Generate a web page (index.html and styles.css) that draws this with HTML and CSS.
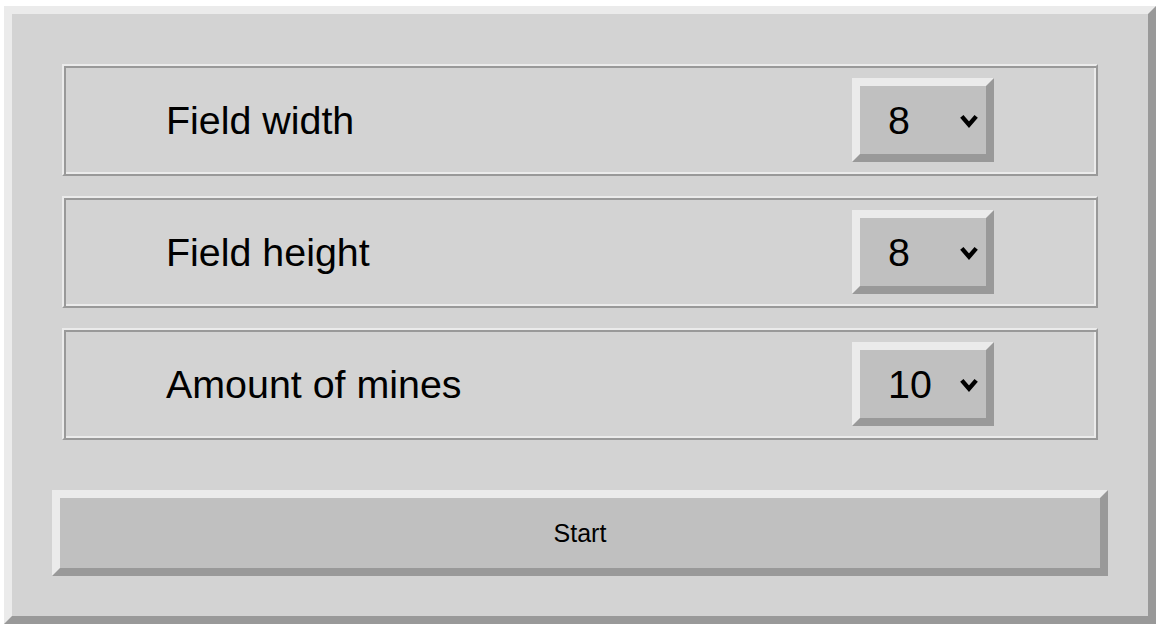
FILE: index.html
```html
<!DOCTYPE html>
<html lang="en">
<head>
<meta charset="utf-8">
<title>Minesweeper settings</title>
<link rel="stylesheet" href="styles.css">
</head>
<body>
<form class="panel">
  <div class="rows">
    <label class="row">
      <span class="label">Field width</span>
      <span class="select-wrap">
        <select class="select">
          <option selected>8</option>
          <option>10</option>
          <option>16</option>
        </select>
        <svg class="chevron" width="19" height="16" viewBox="0 0 19 16" aria-hidden="true"><polyline points="1.8,3.4 9,11.6 16.2,3.4" fill="none" stroke="#000" stroke-width="4.4"/></svg>
      </span>
    </label>
    <label class="row">
      <span class="label">Field height</span>
      <span class="select-wrap">
        <select class="select">
          <option selected>8</option>
          <option>10</option>
          <option>16</option>
        </select>
        <svg class="chevron" width="19" height="16" viewBox="0 0 19 16" aria-hidden="true"><polyline points="1.8,3.4 9,11.6 16.2,3.4" fill="none" stroke="#000" stroke-width="4.4"/></svg>
      </span>
    </label>
    <label class="row">
      <span class="label">Amount of mines</span>
      <span class="select-wrap">
        <select class="select">
          <option selected>10</option>
          <option>20</option>
          <option>40</option>
        </select>
        <svg class="chevron" width="19" height="16" viewBox="0 0 19 16" aria-hidden="true"><polyline points="1.8,3.4 9,11.6 16.2,3.4" fill="none" stroke="#000" stroke-width="4.4"/></svg>
      </span>
    </label>
  </div>
  <button type="button" class="start">Start</button>
</form>
</body>
</html>
```

FILE: styles.css
```css
html, body {
  margin: 0;
  padding: 0;
  background: #ffffff;
}

body {
  font-family: "Liberation Sans", Arial, sans-serif;
  color: #000;
}

.panel {
  box-sizing: border-box;
  width: 1152px;
  height: 618px;
  margin: 6px 4px 4px;
  padding: 50px 50px 40px;
  background: #d3d3d3;
  border: 8px solid;
  border-color: #ebebeb #999999 #999999 #ebebeb;
  display: flex;
  flex-direction: column;
}

.rows {
  display: flex;
  flex-direction: column;
  gap: 20px;
}

.row {
  box-sizing: border-box;
  height: 112px;
  padding: 0 102px;
  display: flex;
  align-items: center;
  justify-content: space-between;
  border: 2px solid;
  border-color: #ebebeb #999999 #999999 #ebebeb;
  box-shadow: inset 2px 2px 0 #999999, inset -2px -2px 0 #ebebeb;
}

.label {
  font-size: 39.4px;
  line-height: 1;
  padding-top: 2px;
}

.select-wrap {
  position: relative;
  display: block;
  width: 142px;
  height: 84px;
}

.select {
  -webkit-appearance: none;
  appearance: none;
  box-sizing: border-box;
  width: 142px;
  height: 84px;
  margin: 0;
  padding: 0 0 0 28px;
  font-family: "Liberation Sans", Arial, sans-serif;
  font-size: 39.4px;
  color: #000;
  background: #c0c0c0;
  border: 8px solid;
  border-color: #ebebeb #999999 #999999 #ebebeb;
  border-radius: 0;
  outline: none;
}

.chevron {
  position: absolute;
  left: 108px;
  top: 35px;
  pointer-events: none;
}

.start {
  box-sizing: border-box;
  height: 86px;
  margin: 50px -10px 0;
  padding: 0;
  font-family: "Liberation Sans", Arial, sans-serif;
  font-size: 25px;
  color: #000;
  background: #c0c0c0;
  border: 8px solid;
  border-color: #ebebeb #999999 #999999 #ebebeb;
  border-radius: 0;
}
```
